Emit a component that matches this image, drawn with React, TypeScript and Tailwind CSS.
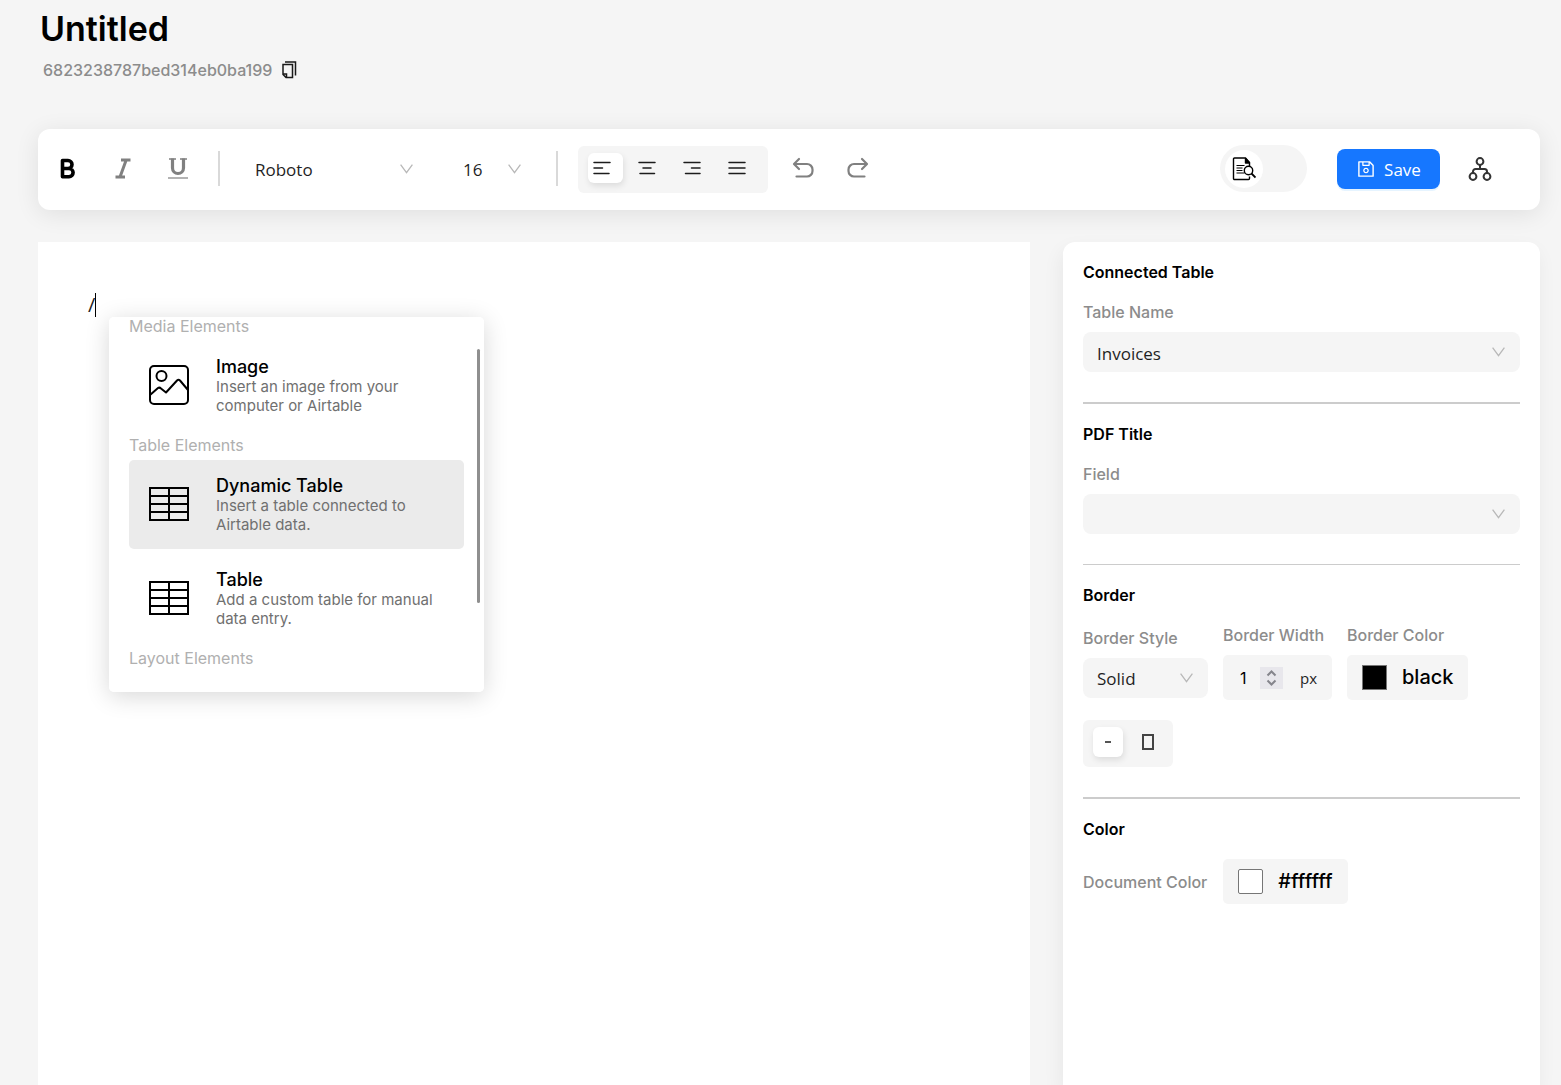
import React, { useState } from "react";
import clsx from "clsx";
import { AiOutlineSave } from "react-icons/ai";

const elementGroups = [
  {
    title: "Media Elements",
    items: [{ id: "image", name: "Image", text: "Insert an image from your computer or Airtable" }],
  },
  {
    title: "Table Elements",
    items: [
      { id: "dynamic", name: "Dynamic Table", text: "Insert a table connected to Airtable data." },
      { id: "table", name: "Table", text: "Add a custom table for manual data entry." },
    ],
  },
  { title: "Layout Elements", items: [] },
];

const alignments = [
  { id: "left", label: "Align left", d: "M2 3.5h16M2 9h8.500M2 14.500h15" },
  { id: "center", label: "Align center", d: "M2 3.5h16M6 9h8M3 14.500h14.500" },
  { id: "right", label: "Align right", d: "M2 3.5h16M9.500 9h8.500M3.500 14.500h14.500" },
  { id: "justify", label: "Justify", d: "M2 3.5h16M2 9h16M2 14.500h16" },
];

function Chevron() {
  return (
    <svg className="w-[13px] h-[10px] shrink-0 text-[#b8b8b8]" viewBox="0 0 13 10" fill="none" stroke="currentColor" strokeWidth="1.3">
      <path d="M.6 .6l5.9 8 5.9-8" />
    </svg>
  );
}

type SelectProps = {
  label: string;
  id: string;
  options: string[];
  className?: string;
};

function Select({ label, id, options, className }: SelectProps) {
  return (
    <div className={clsx("grid h-10 items-center rounded-lg", className)}>
      <select
        id={id}
        aria-label={label}
        className="col-start-1 row-start-1 w-full h-10 pl-[14px] pr-8 pt-[3px] appearance-none bg-transparent outline-none text-[17px] text-[#1f1f1f] font-['Open_Sans',sans-serif]"
      >
        {options.map((option) => (
          <option key={option}>{option}</option>
        ))}
      </select>
      <span className="col-start-1 row-start-1 justify-self-end pr-[15px] pointer-events-none">
        <Chevron />
      </span>
    </div>
  );
}

function TableIcon() {
  return (
    <svg className="w-10 h-10" viewBox="0 0 40 40" fill="none" stroke="currentColor" strokeWidth="2">
      <path d="M1 4h38v32H1zM1 12h38M1 20h38M1 28h38M20 4v32" />
    </svg>
  );
}

function ImageIcon() {
  return (
    <svg className="w-10 h-10" viewBox="0 0 40 40" fill="none" stroke="currentColor" strokeWidth="2" strokeLinejoin="round">
      <rect x="1" y="1" width="38" height="38" rx="4" />
      <circle cx="12.5" cy="11" r="5" />
      <path d="M1 30l8-7q1.500-1 3 .5l5 4 11-12q1.500-1.500 3 0l8 9.500" />
    </svg>
  );
}

function SlashMenu() {
  const [active, setActive] = useState("dynamic");

  return (
    <div className="absolute left-[71px] top-[75px] w-[375px] h-[375px] px-5 rounded-[5px] bg-white overflow-hidden">
      {elementGroups.map((group) => (
        <div key={group.title} className="group">
          <p className="pt-[6px] pb-[5px] group-first:pt-0 text-base leading-[19px] text-[#b0b0b0]">{group.title}</p>
          <div className="flex flex-col gap-[5px]">
            {group.items.map((item) => (
              <button
                key={item.id}
                onMouseEnter={() => setActive(item.id)}
                className={clsx(
                  "flex items-center gap-[27px] w-full h-[89px] px-5 rounded-[5px] text-left",
                  active === item.id && "bg-[#ebebeb]"
                )}
              >
                <span className="shrink-0 pb-px">{item.id === "image" ? <ImageIcon /> : <TableIcon />}</span>
                <span className="flex-1">
                  <span className="block text-lg leading-5 font-medium text-black">{item.name}</span>
                  <span className="block text-[15px] leading-[19px] text-[#707070]">{item.text}</span>
                </span>
              </button>
            ))}
          </div>
        </div>
      ))}
      {/* Scroll thumb */}
      <div className="absolute right-1 top-8 w-[3px] h-[254px] rounded-full bg-[#8f8f8f]" />
    </div>
  );
}

function Toolbar() {
  const [align, setAlign] = useState("left");

  return (
    <div className="flex items-center h-[81px] pl-[17px] pr-12 pb-[2px] rounded-xl bg-white shadow-[0_4px_24px_rgba(0,0,0,0.09)]">
      <div className="flex items-center gap-[31px] text-[#808080]">
        <button aria-label="Bold" className="text-black">
          <svg className="w-6 h-6" viewBox="0 0 24 24" fill="none" stroke="currentColor" strokeWidth="3.6" strokeLinejoin="round">
            <path d="M7.500 3.500h5.500a3.700 3.700 0 0 1 0 8H7.500zM7.500 11.500h6.500a4 4 0 0 1 0 8.200H7.500z" />
          </svg>
        </button>
        <button aria-label="Italic">
          <svg className="w-6 h-6" viewBox="0 0 24 24" fill="none" stroke="currentColor" strokeWidth="3">
            <path d="M11 3h9.500M5.500 20h9.500M16 3.500L10 20" />
          </svg>
        </button>
        <button aria-label="Underline">
          <svg className="w-6 h-6" viewBox="0 0 24 24" fill="none" stroke="currentColor">
            <path strokeWidth="3.2" d="M7.500 1.500v9.500a5.500 5.500 0 0 0 11 0V1.500" />
            <path strokeWidth="1.4" d="M4 2h7M15 2h7" />
            <path strokeWidth="1.2" d="M3 21h20" />
          </svg>
        </button>
      </div>
      <div className="w-[2px] h-[35px] ml-[29px] mr-[21px] bg-[#d9d9d9]" />
      <Select label="Font family" id="font-family" options={["Roboto", "Arial", "Inter"]} className="w-[187px] mr-[21px]" />
      <Select label="Font size" id="font-size" options={["16", "18", "20"]} className="w-[87px]" />
      <div className="w-[2px] h-[35px] ml-5 mr-[21px] bg-[#d9d9d9]" />
      <div className="flex items-center gap-[10px] h-[47px] mt-[2px] px-[10px] pb-[3px] -ml-px rounded-md bg-[#f5f5f5]">
        {alignments.map((item) => (
          <button
            key={item.id}
            aria-label={item.label}
            onClick={() => setAlign(item.id)}
            className={clsx(
              "flex items-center w-[35px] h-[30px] pl-1 rounded-md",
              align === item.id && "bg-white shadow-[1px_3px_6px_rgba(0,0,0,0.1)]"
            )}
          >
            <svg className="w-5 h-[18px]" viewBox="0 0 20 18" fill="none" stroke="#1c1c1c" strokeWidth="1.5" strokeLinecap="round">
              <path d={item.d} />
            </svg>
          </button>
        ))}
      </div>
      <div className="flex items-center gap-[31px] ml-[23px] text-[#808080]">
        <button aria-label="Undo">
          <svg className="w-6 h-6" viewBox="0 0 24 24" fill="none" stroke="currentColor" strokeWidth="2.2" strokeLinecap="round" strokeLinejoin="round">
            <path d="M8 2L3 7l5 5M3.500 7h12.500a5.500 5.500 0 0 1 5.500 5.500v1.500a5.500 5.500 0 0 1-5.500 5.500H5.500" />
          </svg>
        </button>
        <button aria-label="Redo">
          <svg className="w-6 h-6" viewBox="0 0 24 24" fill="none" stroke="currentColor" strokeWidth="2.2" strokeLinecap="round" strokeLinejoin="round">
            <path d="M16 2l5 5-5 5M20.500 7H8a5.500 5.500 0 0 0-5.500 5.500v1.500a5.500 5.500 0 0 0 5.500 5.500h10.500" />
          </svg>
        </button>
      </div>
      <div className="flex items-center ml-auto">
        <button role="switch" aria-checked="false" aria-label="Preview" className="flex items-center w-[87px] h-[47px] px-[5px] rounded-full bg-[#f5f5f5]">
          <span className="flex items-center justify-center w-[38px] h-[38px] rounded-full bg-white">
            <svg className="w-6 h-6" viewBox="0 0 24 24" fill="none" stroke="black" strokeWidth="1.4" strokeLinejoin="round">
              <path d="M17.500 19.500v2a1 1 0 0 1-1 1H2.500a1 1 0 0 1-1-1V2a1 1 0 0 1 1-1h11l4 4.500v4" />
              <path fill="black" d="M13.500 1.500v4.500h4z" />
              <path strokeWidth="1.2" d="M4.500 8.500h8M4.500 11h6M4.500 13.500h6M4.500 16h8" />
              <circle cx="16.500" cy="13.500" r="4.200" />
              <path strokeWidth="1.8" d="M19.500 16.500l4 4" />
            </svg>
          </span>
        </button>
        <button className="flex items-center justify-center gap-2 w-[103px] h-10 ml-[30px] rounded-lg bg-[#1677ff] text-white shadow-[0_2px_0_rgba(5,145,255,0.1)]">
          <AiOutlineSave className="w-5 h-5" />
          <span className="text-[17px] pt-[3px] font-['Open_Sans',sans-serif]">Save</span>
        </button>
        <button aria-label="Workflow" className="ml-7">
          <svg className="w-6 h-6" viewBox="0 0 24 24" fill="none" stroke="#333333" strokeWidth="2">
            <circle cx="12" cy="4.500" r="3.400" />
            <circle cx="5" cy="19.500" r="3.400" />
            <circle cx="19" cy="19.500" r="3.400" />
            <path d="M12 8v4M5 16v-1.500a2.500 2.500 0 0 1 2.500-2.500h9a2.500 2.500 0 0 1 2.500 2.500V16" />
          </svg>
        </button>
      </div>
    </div>
  );
}

function Heading({ children }: { children: React.ReactNode }) {
  return <h2 className="mb-5 text-base leading-5 font-semibold text-black">{children}</h2>;
}

const labelClass = "block text-base leading-5 font-medium text-[#8c8c8c]";

function ColorButton({ value, swatch }: { value: string; swatch: string }) {
  return (
    <button aria-label={"Color " + value} className="flex items-center gap-[15px] h-[45px] px-[15px] rounded-[5px] bg-[#f5f5f5]">
      <span className={clsx("w-[25px] h-[25px] border border-[#767676]", swatch)} />
      <span className="pb-[2px] text-xl leading-6 font-medium text-black">{value}</span>
    </button>
  );
}

function SettingsPanel() {
  return (
    <aside className="p-5 rounded-t-xl bg-white shadow-[-2px_8px_20px_rgba(0,0,0,0.06)]">
      <section>
        <Heading>Connected Table</Heading>
        <label htmlFor="table-name" className={labelClass}>Table Name</label>
        <Select label="Table Name" id="table-name" options={["Invoices"]} className="mt-[10px] bg-[#f5f5f5]" />
      </section>
      <hr className="mt-[30px] mb-5 border-t-2 border-[#cccccc]" />
      <section>
        <Heading>PDF Title</Heading>
        <label htmlFor="pdf-field" className={labelClass}>Field</label>
        <Select label="Field" id="pdf-field" options={[""]} className="mt-[10px] bg-[#f5f5f5]" />
      </section>
      <hr className="mt-[30px] mb-5 border-t border-[#cccccc]" />
      <section>
        <Heading>Border</Heading>
        <div className="flex items-center gap-[15px]">
          <div>
            <label htmlFor="border-style" className={labelClass}>Border Style</label>
            <Select label="Border Style" id="border-style" options={["Solid", "Dashed"]} className="w-[125px] mt-[10px] bg-[#f5f5f5]" />
          </div>
          <div>
            <label htmlFor="border-width" className={labelClass}>Border Width</label>
            <div className="flex items-center w-[109px] h-[45px] mt-[10px] px-[15px] rounded-[5px] bg-[#f5f5f5]">
              <input
                id="border-width"
                inputMode="numeric"
                defaultValue="1"
                className="w-[22px] pl-[2px] bg-transparent outline-none text-base text-black"
              />
              <svg className="w-[23px] h-[22px] bg-[#e8e7ec]" viewBox="0 0 23 22" fill="none" stroke="#85858c" strokeWidth="2">
                <path d="M7.500 8.500l4-4 4 4M7.500 13.500l4 4 4-4" />
              </svg>
              <span className="ml-auto pt-[2px] text-[15px] text-[#1f1f1f] font-['Open_Sans',sans-serif]">px</span>
            </div>
          </div>
          <div>
            <span className={labelClass}>Border Color</span>
            <div className="mt-[10px]">
              <ColorButton value="black" swatch="bg-black" />
            </div>
          </div>
        </div>
        <div className="flex items-center gap-[10px] w-[90px] h-[47px] mt-5 px-[10px] pb-[3px] rounded-md bg-[#f5f5f5]">
          <button aria-label="Line border" className="flex items-center justify-center w-[30px] h-[30px] rounded-md bg-white shadow-[1px_3px_6px_rgba(0,0,0,0.1)]">
            <span className="w-[6px] h-[2px] bg-[#555555]" />
          </button>
          <button aria-label="Box border" className="flex items-center justify-center w-[30px] h-[30px]">
            <span className="w-3 h-4 border-2 border-[#444444]" />
          </button>
        </div>
      </section>
      <hr className="mt-[30px] mb-5 border-t-2 border-[#cccccc]" />
      <section>
        <Heading>Color</Heading>
        <div className="flex items-center gap-4">
          <span className={labelClass}>Document Color</span>
          <ColorButton value="#ffffff" swatch="bg-white rounded-[2px]" />
        </div>
      </section>
    </aside>
  );
}

export default function App() {
  return (
    <div className="flex flex-col min-h-screen pl-[38px] pr-[21px] bg-[#f5f5f5] font-['Inter',sans-serif]">
      <header className="h-[129px] pt-2 pl-[2px]">
        <h1 className="text-[34px] leading-[42px] font-semibold text-black">Untitled</h1>
        <div className="flex items-center gap-[10px] mt-[10px] pl-[3px]">
          <span className="text-base leading-5 font-medium text-[#8c8c8c]">6823238787bed314eb0ba199</span>
          <button aria-label="Copy id">
            <svg className="w-[15px] h-[18px]" viewBox="0 0 15 18" fill="none" stroke="#1a1a1a" strokeWidth="1.5">
              <path d="M1 3.500h9.500v13H4L1 13.500zM1 13h3.500v3.500M3 1h10.500v13.500" />
            </svg>
          </button>
        </div>
      </header>
      <Toolbar />
      <main className="grid flex-1 grid-cols-[1fr_477px] gap-[33px] mt-8">
        <div className="relative bg-white">
          <div className="flex items-center h-6 mt-[51px] ml-[50px] text-xl text-[#1f1f1f] font-['Open_Sans',sans-serif]">
            <span>/</span>
            <span className="w-px h-6 bg-black" />
          </div>
          <div className="absolute left-[71px] top-[75px] w-[375px] h-[375px] rounded-[5px] shadow-[0_4px_24px_rgba(0,0,0,0.16)]" />
          <SlashMenu />
        </div>
        <SettingsPanel />
      </main>
    </div>
  );
}
